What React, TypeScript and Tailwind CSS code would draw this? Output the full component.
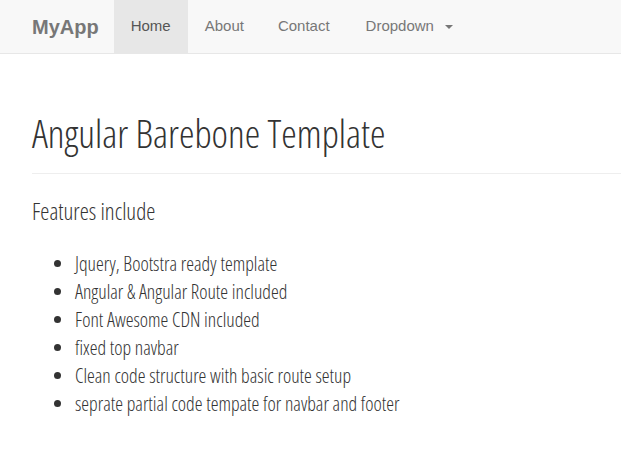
import React from 'react';

const features = [
  'Jquery, Bootstra ready template',
  'Angular & Angular Route included',
  'Font Awesome CDN included',
  'fixed top navbar',
  'Clean code structure with basic route setup',
  'seprate partial code tempate for navbar and footer',
];

const links = ['Home', 'About', 'Contact'];

export default function App() {
  return (
    <div className="min-h-screen bg-white font-['Liberation_Sans',Arial,sans-serif]">
      <nav className="flex h-[54px] items-stretch border-b border-[#e7e7e7] bg-[#f8f8f8] pl-[32px]">
        <a className="flex items-center pr-[15px] text-[20px] font-bold text-[#777]">MyApp</a>
        {links.map((link, i) => (
          <a
            key={link}
            className={
              i === 0
                ? 'flex items-center bg-[#e7e7e7] px-[17px] text-[15px] text-[#555]'
                : 'flex items-center px-[17px] text-[15px] text-[#777]'
            }
          >
            {link}
          </a>
        ))}
        <a className="flex items-center gap-[11px] pl-[19px] pr-[16px] text-[15px] text-[#777]">
          Dropdown
          <span className="mt-[1px] h-0 w-0 border-x-[4px] border-t-[4px] border-x-transparent border-t-[#777]" />
        </a>
      </nav>

      <main className="pl-[32px] font-['Open_Sans',sans-serif] font-light text-[#333] [font-stretch:75%]">
        <h1 className="pt-[57px] pb-[19px] text-[39.2px] leading-[1.1]">Angular Barebone Template</h1>
        <div className="border-t border-[#eee]" />
        <h3 className="mt-[25px] text-[23px] leading-[1.1]">Features include</h3>
        <ul className="mt-[26px] list-disc pl-[43px] text-[19.7px] leading-[28px] marker:text-[#333]">
          {features.map(f => (
            <li key={f}>{f}</li>
          ))}
        </ul>
      </main>
    </div>
  );
}
